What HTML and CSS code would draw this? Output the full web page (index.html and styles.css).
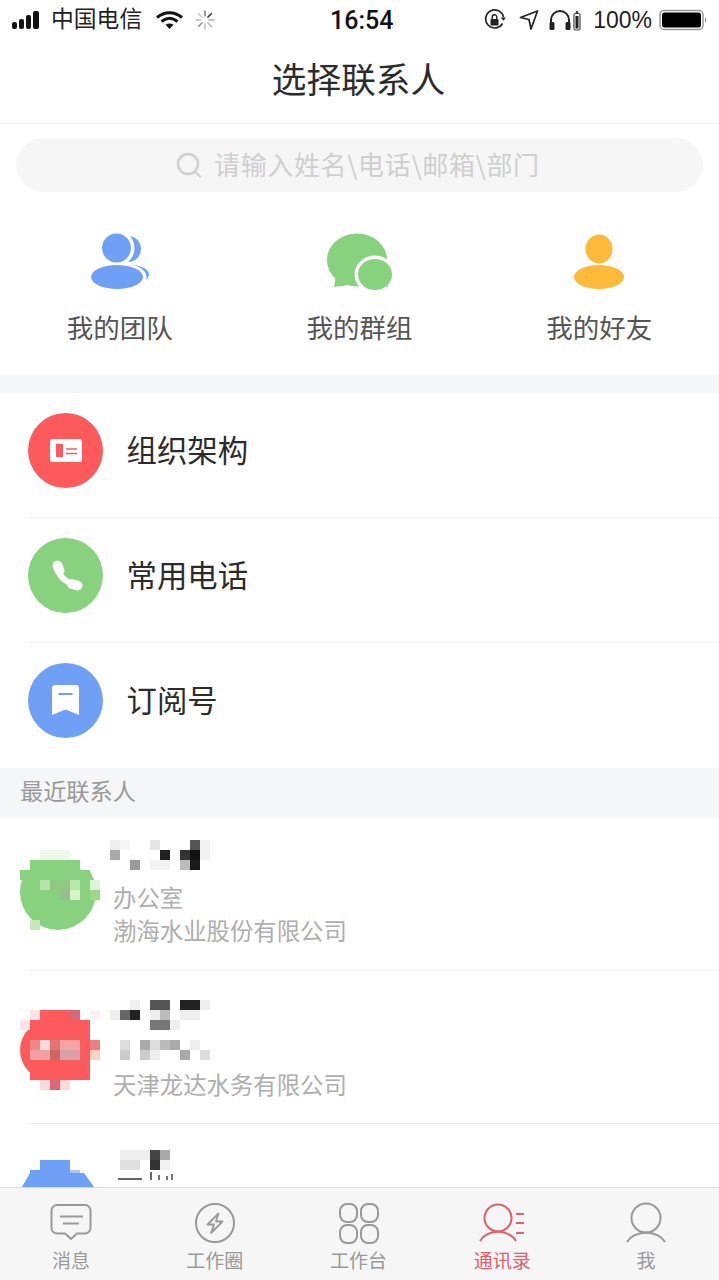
FILE: index.html
```html
<!DOCTYPE html>
<html lang="zh-CN">
<head>
<meta charset="utf-8">
<title>选择联系人</title>
<link rel="stylesheet" href="styles.css">
</head>
<body>
<div class="app">
  <header class="status">
    <div class="status-left">
      <svg class="ic-signal" width="32" height="20" viewBox="0 0 32 20"><rect x="0" y="12" width="5" height="7" rx="2"/><rect x="7" y="9" width="5" height="10" rx="2"/><rect x="14" y="5" width="5" height="14" rx="2"/><rect x="21" y="1" width="6" height="18" rx="2"/></svg>
      <span class="carrier">中国电信</span>
      <svg class="ic-wifi" width="27" height="20" viewBox="0 0 27 20"><path d="M1 7.5C8.5 1 18.500 1 26 7.500" fill="none" stroke="#111" stroke-width="3"/><path d="M5.500 11.500C10.500 7.500 16.500 7.500 21.500 11.500" fill="none" stroke="#111" stroke-width="3"/><path d="M9.500 14.800Q13.500 12.200 17.500 14.800L13.500 19Z" fill="#111"/></svg>
      <svg class="ic-spin" width="20" height="20" viewBox="0 0 20 20" stroke-width="1.500" stroke-linecap="round"><path d="M10 1v5" stroke="#777"/><path d="M16.400 3.600l-3.500 3.500" stroke="#444"/><path d="M19 10h-5" stroke="#aaa"/><path d="M16.400 16.400l-3.500-3.500" stroke="#bbb"/><path d="M10 19v-5" stroke="#bbb"/><path d="M3.600 16.400l3.500-3.500" stroke="#999"/><path d="M1 10h5" stroke="#bbb"/><path d="M3.600 3.600l3.500 3.500" stroke="#ccc"/></svg>
    </div>
    <span class="time">16:54</span>
    <div class="status-right">
      <svg width="22" height="22" viewBox="0 0 22 22"><path d="M18.500 14.500A9 9 0 1 1 19.500 8" fill="none" stroke="#222" stroke-width="1.700"/><path d="M16.800 8.500h5.200l-2.600 3.200z" fill="#222"/><rect x="6.500" y="10" width="8" height="6.500" rx="1" fill="#222"/><path d="M8.200 10V8a2.300 2.300 0 0 1 4.600 0v2" fill="none" stroke="#222" stroke-width="1.400"/></svg>
      <svg class="gap-l" width="20" height="22" viewBox="0 0 20 22"><path d="M1.500 8.500L18.500 2 12 20 10 10.500Z" fill="none" stroke="#222" stroke-width="1.700" stroke-linejoin="round"/></svg>
      <svg class="gap-l2" width="32" height="22" viewBox="0 0 32 22"><path d="M2 19V11a9 9 0 0 1 18 0v8" fill="none" stroke="#222" stroke-width="2"/><rect x="0.500" y="13" width="5" height="8" rx="1.500" fill="#222"/><rect x="16.500" y="13" width="5" height="8" rx="1.500" fill="#222"/><rect x="25" y="4.500" width="6" height="16.500" rx="1.500" fill="none" stroke="#444" stroke-width="1.200"/><rect x="26.500" y="7" width="3" height="12.500" fill="#222"/><rect x="26.800" y="2" width="2.400" height="2" fill="#444"/></svg>
      <span class="pct">100%</span>
      <svg class="gap-b" width="50" height="22" viewBox="0 0 50 22"><rect x="1" y="1.500" width="43" height="19" rx="4" fill="none" stroke="#999" stroke-width="1.500"/><rect x="3" y="3.500" width="39" height="15" rx="2.500" fill="#000"/><path d="M46 8q2.500 3 0 6z" fill="#888"/></svg>
    </div>
  </header>

  <div class="nav"><h1 class="nav-title">选择联系人</h1></div>

  <main class="scroll">
    <div class="search-wrap">
      <div class="search">
        <svg width="28" height="28" viewBox="0 0 28 28"><circle cx="13" cy="13" r="10" fill="none" stroke="#cfcfcf" stroke-width="2.400"/><path d="M20 20.500l5 5" stroke="#cfcfcf" stroke-width="2.400" stroke-linecap="round"/></svg>
        <span class="search-text">请输入姓名\电话\邮箱\部门</span>
      </div>
    </div>

    <section class="quick">
      <div class="quick-item">
        <svg class="over" width="60" height="60" viewBox="0 0 60 60"><circle cx="38" cy="17" r="13" fill="#6fa0f5"/><ellipse cx="26.500" cy="16" rx="18" ry="18.500" fill="#fff"/><ellipse cx="38" cy="42.500" rx="21" ry="10" fill="#6fa0f5"/><ellipse cx="27" cy="45" rx="29.500" ry="15" fill="#fff"/><ellipse cx="26.500" cy="16" rx="14.500" ry="14.500" fill="#6fa0f5"/><ellipse cx="27" cy="45" rx="26" ry="12" fill="#6fa0f5"/></svg>
        <span class="quick-label">我的团队</span>
      </div>
      <div class="quick-item">
        <svg class="over" width="60" height="60" viewBox="0 0 60 60"><ellipse cx="28" cy="28" rx="30" ry="26.500" fill="#88d17e"/><path d="M7 43L5 55 20 53Z" fill="#88d17e"/><path d="M52 52l6 5-1-8z" fill="#88d17e"/><ellipse cx="46" cy="42.500" rx="20.500" ry="19" fill="#fff"/><ellipse cx="46" cy="42.500" rx="17" ry="15.500" fill="#88d17e"/><path d="M55 52l4 4-1-6z" fill="#88d17e"/></svg>
        <span class="quick-label">我的群组</span>
      </div>
      <div class="quick-item">
        <svg width="60" height="60" viewBox="0 0 60 60"><ellipse cx="30" cy="17" rx="13.500" ry="14.500" fill="#fdb93a"/><ellipse cx="30" cy="45" rx="25" ry="12" fill="#fdb93a"/></svg>
        <span class="quick-label">我的好友</span>
      </div>
    </section>

    <div class="band"></div>

    <section>
      <div class="menu-row">
        <svg width="75" height="75" viewBox="0 0 75 75"><circle cx="37.500" cy="37.500" r="37.500" fill="#fc5a5d"/><rect x="22" y="26" width="32" height="23" rx="2.500" fill="#fff"/><rect x="28" y="31" width="7" height="13" fill="#fc5a5d"/><path d="M38 36h11M38 40.500h11" stroke="#fc5a5d" stroke-width="1.500"/></svg>
        <span class="menu-label">组织架构</span>
      </div>
      <div class="sep"></div>
      <div class="menu-row">
        <svg width="75" height="75" viewBox="0 0 75 75"><circle cx="37.500" cy="37.500" r="37.500" fill="#88d17e"/><path d="M29 28Q31 42 47 47" fill="none" stroke="#fff" stroke-width="6"/><path d="M29.500 27.500L31.500 32.500M44 46L49.500 47.500" stroke="#fff" stroke-width="10" stroke-linecap="round"/></svg>
        <span class="menu-label">常用电话</span>
      </div>
      <div class="sep"></div>
      <div class="menu-row menu-row-last">
        <svg width="75" height="75" viewBox="0 0 75 75"><circle cx="37.500" cy="37.500" r="37.500" fill="#6fa0f5"/><path d="M27 22H48a3 3 0 0 1 3 3V52L37.500 46.500 24 52V25a3 3 0 0 1 3-3Z" fill="#fff"/><path d="M30.500 31h14" stroke="#6fa0f5" stroke-width="2"/></svg>
        <span class="menu-label">订阅号</span>
      </div>
    </section>

    <div class="section-head">最近联系人</div>

    <section>
      <div class="contact">
        <svg class="avatar avatar-1" width="90" height="90" viewBox="20 850 90 90" shape-rendering="crispEdges">
          <circle cx="58" cy="892" r="38" fill="#88d17e" shape-rendering="auto"/>
          <rect x="20" y="850" width="80" height="20" fill="#fff"/>
          <rect x="40" y="850" width="30" height="10" fill="#eef9eb"/>
          <rect x="30" y="860" width="50" height="10" fill="#88d17e"/>
          <rect x="20" y="870" width="70" height="10" fill="#88d17e"/>
          <rect x="40" y="880" width="10" height="10" fill="#b5e3a8"/>
          <rect x="50" y="880" width="20" height="10" fill="#8fc983"/>
          <rect x="70" y="880" width="10" height="10" fill="#b8e6ae"/>
          <rect x="90" y="880" width="10" height="10" fill="#dcf6d5"/>
          <rect x="60" y="890" width="10" height="10" fill="#94c08c"/>
          <rect x="70" y="890" width="10" height="10" fill="#d8f5c8"/>
          <rect x="80" y="890" width="10" height="10" fill="#88d17e"/>
          <rect x="90" y="890" width="10" height="10" fill="#9bd98a"/>
          <rect x="30" y="920" width="10" height="10" fill="#c4eaba"/>
        </svg>
        <div class="contact-body contact-body-1">
          <svg class="block" width="110" height="30" viewBox="110 840 110 30" shape-rendering="crispEdges">
            <rect x="110" y="840" width="10" height="10" fill="#eee"/><rect x="120" y="840" width="10" height="10" fill="#f7f7f7"/><rect x="150" y="840" width="10" height="10" fill="#e5e5e5"/><rect x="190" y="840" width="10" height="10" fill="#555"/><rect x="200" y="840" width="10" height="10" fill="#f2f2f2"/>
            <rect x="110" y="850" width="10" height="10" fill="#aaa"/><rect x="160" y="850" width="10" height="10" fill="#222"/><rect x="180" y="850" width="10" height="10" fill="#333"/><rect x="190" y="850" width="10" height="10" fill="#111"/><rect x="200" y="850" width="10" height="10" fill="#f2f2f2"/>
            <rect x="130" y="860" width="10" height="10" fill="#999"/><rect x="150" y="860" width="20" height="10" fill="#f3f3f3"/><rect x="180" y="860" width="10" height="10" fill="#bbb"/><rect x="190" y="860" width="10" height="10" fill="#1a1a1a"/>
          </svg>
          <p class="dept">办公室</p>
          <p class="dept">渤海水业股份有限公司</p>
        </div>
      </div>
      <div class="sep"></div>
      <div class="contact">
        <svg class="avatar avatar-2" width="90" height="100" viewBox="20 1000 90 100" shape-rendering="crispEdges">
          <ellipse cx="50" cy="1050" rx="30" ry="30" fill="#fc5a5d" shape-rendering="auto"/>
          <rect x="40" y="1010" width="40" height="10" fill="#fc5a5d"/>
          <rect x="30" y="1020" width="60" height="60" fill="#fc5a5d"/>
          <rect x="30" y="1010" width="10" height="10" fill="#fde4e4"/><rect x="70" y="1010" width="10" height="10" fill="#d96a75"/><rect x="90" y="1010" width="10" height="10" fill="#fef4f4"/>
          <rect x="20" y="1020" width="10" height="10" fill="#fde4e4"/>
          <rect x="30" y="1040" width="10" height="10" fill="#ee8888"/><rect x="40" y="1040" width="10" height="10" fill="#fddada"/><rect x="50" y="1040" width="10" height="10" fill="#e77474"/><rect x="60" y="1040" width="20" height="10" fill="#f4a5a5"/><rect x="90" y="1040" width="10" height="10" fill="#f08080"/>
          <rect x="30" y="1050" width="20" height="10" fill="#f3a0a0"/><rect x="50" y="1050" width="10" height="10" fill="#cc6666"/><rect x="60" y="1050" width="20" height="10" fill="#d8a0a8"/><rect x="90" y="1050" width="10" height="10" fill="#fdd0c8"/>
          <rect x="40" y="1080" width="10" height="10" fill="#fcd8d8"/><rect x="50" y="1080" width="10" height="10" fill="#d6687a"/><rect x="60" y="1080" width="10" height="10" fill="#fcd8d8"/>
        </svg>
        <div class="contact-body contact-body-2">
          <svg class="block" width="110" height="30" viewBox="110 1000 110 30" shape-rendering="crispEdges">
            <rect x="130" y="1000" width="10" height="10" fill="#f0f0f0"/><rect x="150" y="1000" width="20" height="10" fill="#555"/><rect x="180" y="1000" width="20" height="10" fill="#222"/><rect x="200" y="1000" width="10" height="10" fill="#eee"/>
            <rect x="110" y="1010" width="10" height="10" fill="#eee"/><rect x="120" y="1010" width="10" height="10" fill="#666"/><rect x="130" y="1010" width="10" height="10" fill="#222"/><rect x="150" y="1010" width="10" height="10" fill="#eee"/><rect x="160" y="1010" width="10" height="10" fill="#bbb"/><rect x="180" y="1010" width="20" height="10" fill="#eee"/>
            <rect x="150" y="1020" width="20" height="10" fill="#777"/><rect x="170" y="1020" width="10" height="10" fill="#eee"/>
          </svg>
          <svg class="block block-gap" width="110" height="20" viewBox="110 1040 110 20" shape-rendering="crispEdges">
            <rect x="120" y="1040" width="10" height="10" fill="#ddd"/><rect x="140" y="1040" width="10" height="10" fill="#aaa"/><rect x="150" y="1040" width="10" height="10" fill="#ddd"/><rect x="160" y="1040" width="10" height="10" fill="#bbb"/><rect x="170" y="1040" width="10" height="10" fill="#aaa"/><rect x="190" y="1040" width="10" height="10" fill="#eee"/>
            <rect x="120" y="1050" width="10" height="10" fill="#ccc"/><rect x="140" y="1050" width="10" height="10" fill="#ccc"/><rect x="150" y="1050" width="10" height="10" fill="#eee"/><rect x="180" y="1050" width="10" height="10" fill="#aaa"/><rect x="200" y="1050" width="10" height="10" fill="#ddd"/>
          </svg>
          <p class="dept dept-2">天津龙达水务有限公司</p>
        </div>
      </div>
      <div class="sep"></div>
      <div class="contact">
        <svg class="avatar avatar-3" width="90" height="60" viewBox="20 1150 90 60" shape-rendering="crispEdges">
          <rect x="40" y="1160" width="30" height="10" fill="#6fa0f5"/>
          <rect x="30" y="1170" width="40" height="10" fill="#6fa0f5"/>
          <rect x="70" y="1170" width="10" height="10" fill="#a9c5f4"/>
          <polygon points="30,1173 22,1187 94,1187 84,1173" fill="#6fa0f5" shape-rendering="auto"/>
        </svg>
        <div class="contact-body contact-body-3">
          <svg class="block" width="70" height="37" viewBox="110 1150 70 37" shape-rendering="crispEdges">
            <rect x="120" y="1150" width="30" height="10" fill="#eee"/><rect x="150" y="1150" width="10" height="10" fill="#444"/><rect x="160" y="1150" width="10" height="10" fill="#aaa"/>
            <rect x="120" y="1160" width="20" height="10" fill="#e0e0e0"/><rect x="150" y="1160" width="10" height="10" fill="#333"/><rect x="160" y="1160" width="10" height="10" fill="#f2f2f2"/>
            <rect x="118" y="1178" width="24" height="2" fill="#666"/><rect x="150" y="1172" width="2" height="8" fill="#666"/><rect x="158" y="1175" width="2" height="5" fill="#777"/><rect x="166" y="1176" width="2" height="4" fill="#777"/><rect x="171" y="1174" width="2" height="6" fill="#777"/>
          </svg>
        </div>
      </div>
    </section>
  </main>

  <nav class="tabs">
    <div class="tab">
      <svg width="50" height="42" viewBox="0 0 50 42"><path d="M11 3H39a5.500 5.500 0 0 1 5.500 5.500V26a5.500 5.500 0 0 1-5.500 5.500H31L25 37 19 31.500H11A5.500 5.500 0 0 1 5.500 26V8.500A5.500 5.500 0 0 1 11 3Z" fill="none" stroke="#999" stroke-width="2"/><path d="M14 14.500H37M17 21.500H33" stroke="#999" stroke-width="2"/></svg>
      <span class="tab-label">消息</span>
    </div>
    <div class="tab">
      <svg width="50" height="42" viewBox="0 0 50 42"><circle cx="25" cy="21" r="19" fill="none" stroke="#999" stroke-width="2"/><path d="M28.500 11.500L17.500 22.500H24L21 31 32.500 19.500H26Z" fill="none" stroke="#999" stroke-width="1.800" stroke-linejoin="round"/></svg>
      <span class="tab-label">工作圈</span>
    </div>
    <div class="tab">
      <svg width="50" height="42" viewBox="0 0 50 42" fill="none" stroke="#999" stroke-width="2"><rect x="7" y="2" width="17" height="18" rx="7"/><rect x="28" y="2" width="17" height="18" rx="7"/><rect x="7" y="23" width="17" height="18" rx="7"/><rect x="28" y="23" width="17" height="18" rx="7"/></svg>
      <span class="tab-label">工作台</span>
    </div>
    <div class="tab tab-active">
      <svg width="50" height="42" viewBox="0 0 50 42" fill="none" stroke="#e0606a" stroke-width="2"><ellipse cx="21" cy="16" rx="13.500" ry="13.500"/><path d="M3 39C7 32 14 30 21 29.500 28 30 35 32 39 39"/><path d="M39 12H47M39 21H47M39 31H47"/></svg>
      <span class="tab-label">通讯录</span>
    </div>
    <div class="tab">
      <svg width="50" height="42" viewBox="0 0 50 42" fill="none" stroke="#999" stroke-width="2"><circle cx="25" cy="16" r="14.500"/><path d="M6 40C10 33 17 31 25 30.500 33 31 40 33 44 40"/></svg>
      <span class="tab-label">我</span>
    </div>
  </nav>
</div>
</body>
</html>
```
FILE: styles.css
```css
* { box-sizing: border-box; }
html, body { margin: 0; padding: 0; background: #fff; }
body { font-family: "Noto Sans CJK SC", "Noto Sans", sans-serif; color: #2b2b2b; }
p, h1 { margin: 0; font-weight: 400; }
svg { display: block; flex: none; }
.over { overflow: visible; }

.app { width: 719px; height: 1280px; display: flex; flex-direction: column; overflow: hidden; }

.status { height: 40px; flex: none; display: flex; align-items: center; justify-content: space-between; padding: 0 10px 0 12px; position: relative; }
.status-left { display: flex; align-items: center; width: 260px; }
.ic-signal { fill: #111; }
.carrier { font-size: 22.800px; line-height: 36px; padding-bottom: 4px; margin-left: 7px; color: #222; }
.ic-wifi { margin-left: 14px; }
.ic-spin { margin-left: 12px; }
.time { font-family: Roboto, "Liberation Sans", sans-serif; font-weight: 500; font-size: 25px; color: #111; margin-left: 58px; }
.status-right { display: flex; align-items: center; margin-left: auto; }
.gap-l { margin-left: 13px; }
.gap-l2 { margin-left: 10px; }
.pct { font-family: "Liberation Sans", sans-serif; font-size: 23px; margin-left: 12px; color: #222; }
.gap-b { margin-left: 7px; }

.nav { height: 84px; flex: none; display: flex; align-items: center; justify-content: center; border-bottom: 1px solid #f4f4f4; padding: 0 2px 8px 0; }
.nav-title { font-size: 34.700px; line-height: 50px; color: #2b2b2b; }

.scroll { flex: 1; min-height: 0; overflow: hidden; }

.search-wrap { padding: 14px 16px 0; }
.search { height: 54px; border-radius: 27px; background: #f6f6f6; display: flex; align-items: center; padding-left: 159px; gap: 11px; }
.search-text { font-size: 26px; letter-spacing: 0.650px; color: #cfcfcf; line-height: 50px; padding-bottom: 2px; white-space: nowrap; }

.quick { display: grid; grid-template-columns: repeat(3, 1fr); height: 183px; padding-top: 40px; }
.quick-item { display: flex; flex-direction: column; align-items: center; }
.quick-label { font-size: 26.500px; line-height: 38px; margin-top: 16px; color: #555; }

.band { height: 18px; background: #f5f6f7; }

.menu-row { height: 124px; display: flex; align-items: flex-start; padding: 20px 0 0 28px; gap: 23.500px; }
.menu-row-last { height: 125px; }
.menu-label { font-size: 30.400px; line-height: 75px; margin-top: -1px; color: #2b2b2b; }
.sep { height: 1px; margin-left: 28px; background: #eeeeee; }

.section-head { height: 50px; background: #f5f6f7; padding-left: 20px; font-size: 23.200px; line-height: 45px; color: #999; }

.contact { height: 152px; display: flex; align-items: flex-start; padding-left: 20px; }
.avatar-1 { margin-top: 32px; }
.avatar-2 { margin-top: 29px; }
.avatar-3 { margin-top: 26px; }
.contact-body-1 { padding-top: 22px; }
.contact-body-2 { padding-top: 29px; }
.contact-body-3 { padding-top: 26px; }
.block-gap { margin-top: 10px; }
.dept { font-size: 23.400px; line-height: 33px; color: #aeaeae; margin-left: 3px; white-space: nowrap; }
.dept:nth-of-type(1) { margin-top: 11px; }
.dept-2:nth-of-type(1) { margin-top: 8px; }

.tabs { height: 93px; flex: none; display: grid; grid-template-columns: repeat(5, 1fr); background: #f6f6f7; border-top: 1px solid #d8d8d8; padding-top: 14px; }
.tab { display: flex; flex-direction: column; align-items: center; padding-right: 2px; }
.tab-label { font-size: 19px; line-height: 26px; margin-top: 3px; color: #999; }
.tab-active .tab-label { color: #e0606a; }
```
